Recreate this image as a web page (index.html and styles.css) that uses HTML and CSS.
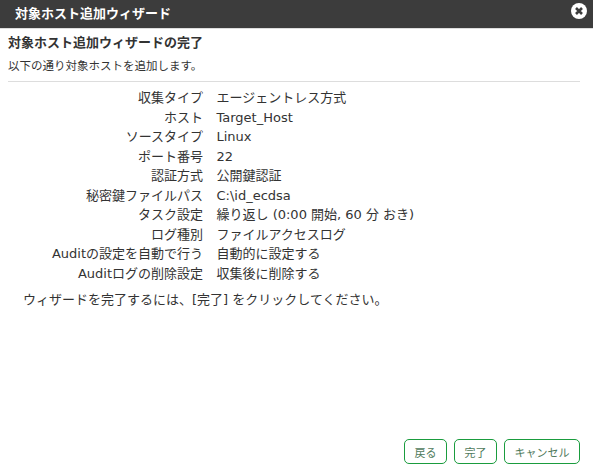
FILE: index.html
```html
<!DOCTYPE html>
<html lang="ja">

<head>
  <meta charset="UTF-8">
  <title>対象ホスト追加ウィザード</title>
  <link rel="stylesheet" href="styles.css">
</head>

<body>
  <div class="dialog">
    <div class="titlebar">
      <span class="title">対象ホスト追加ウィザード</span>
      <svg class="close" width="16" height="16" viewBox="0 0 16 16">
        <circle cx="8" cy="8" r="8" fill="#fff" />
        <path d="M5 5L11 11M11 5L5 11" stroke="#3c3c3c" stroke-width="2.6" />
      </svg>
    </div>
    <div class="content">
      <h2>対象ホスト追加ウィザードの完了</h2>
      <p class="lead">以下の通り対象ホストを追加します。</p>
      <table class="summary">
        <tr><th>収集タイプ</th><td>エージェントレス方式</td></tr>
        <tr><th>ホスト</th><td>Target_Host</td></tr>
        <tr><th>ソースタイプ</th><td>Linux</td></tr>
        <tr><th>ポート番号</th><td>22</td></tr>
        <tr><th>認証方式</th><td>公開鍵認証</td></tr>
        <tr><th>秘密鍵ファイルパス</th><td>C:\id_ecdsa</td></tr>
        <tr><th>タスク設定</th><td>繰り返し (0:00 開始, 60 分 おき)</td></tr>
        <tr><th>ログ種別</th><td>ファイルアクセスログ</td></tr>
        <tr><th>Auditの設定を自動で行う</th><td>自動的に設定する</td></tr>
        <tr><th>Auditログの削除設定</th><td>収集後に削除する</td></tr>
      </table>
      <p class="note">ウィザードを完了するには、[完了] をクリックしてください。</p>
    </div>
    <div class="buttons">
      <button>戻る</button>
      <button>完了</button>
      <button class="wide">キャンセル</button>
    </div>
  </div>
</body>

</html>
```

FILE: styles.css
```css
html,
body {
  height: 100%;
}

body {
  margin: 0;
  background-color: #fff;
  color: #333;
  font-family: "DejaVu Sans", "Noto Sans CJK JP", sans-serif;
  font-size: 13px;
}

.dialog {
  display: flex;
  flex-direction: column;
  height: 100%;
}

.titlebar {
  display: flex;
  justify-content: space-between;
  align-items: center;
  height: 28px;
  padding: 0 6px 0 15px;
  background-color: #3c3c3c;
  border-bottom: 1px solid #ddd;
  color: #fff;
  font-weight: bold;
}

.title {
  margin-top: -3px;
}

.close {
  margin-top: -7px;
}

.content {
  flex-grow: 1;
  padding: 0 13px 0 8px;
}

h2 {
  margin: 4px 0 0 0;
  font-size: 13px;
  line-height: 20px;
}

.lead {
  margin: 3px 0 0 0;
  padding-bottom: 5px;
  line-height: 20px;
  font-size: 11.5px;
  border-bottom: 1px solid #ddd;
}

.summary {
  margin: 6.25px 0 0 0;
  border-collapse: collapse;
}

.summary th {
  width: 195px;
  padding: 0 13.5px 0 0;
  height: 19.5px;
  text-align: right;
  font-weight: normal;
  line-height: 19.5px;
  white-space: nowrap;
}

.summary td {
  padding: 0;
  line-height: 19.5px;
  white-space: nowrap;
}

.note {
  margin: 7px 0 0 15px;
  line-height: 20px;
}

.buttons {
  display: flex;
  justify-content: flex-end;
  gap: 7px;
  padding: 0 13px 7px 0;
}

button {
  width: 43px;
  height: 25px;
  padding: 0;
  background-color: #fff;
  border: 1px solid #1a9c3e;
  border-radius: 5px;
  color: #4f7a5c;
  font-family: inherit;
  font-size: 11px;
}

button.wide {
  width: 76px;
}
```
